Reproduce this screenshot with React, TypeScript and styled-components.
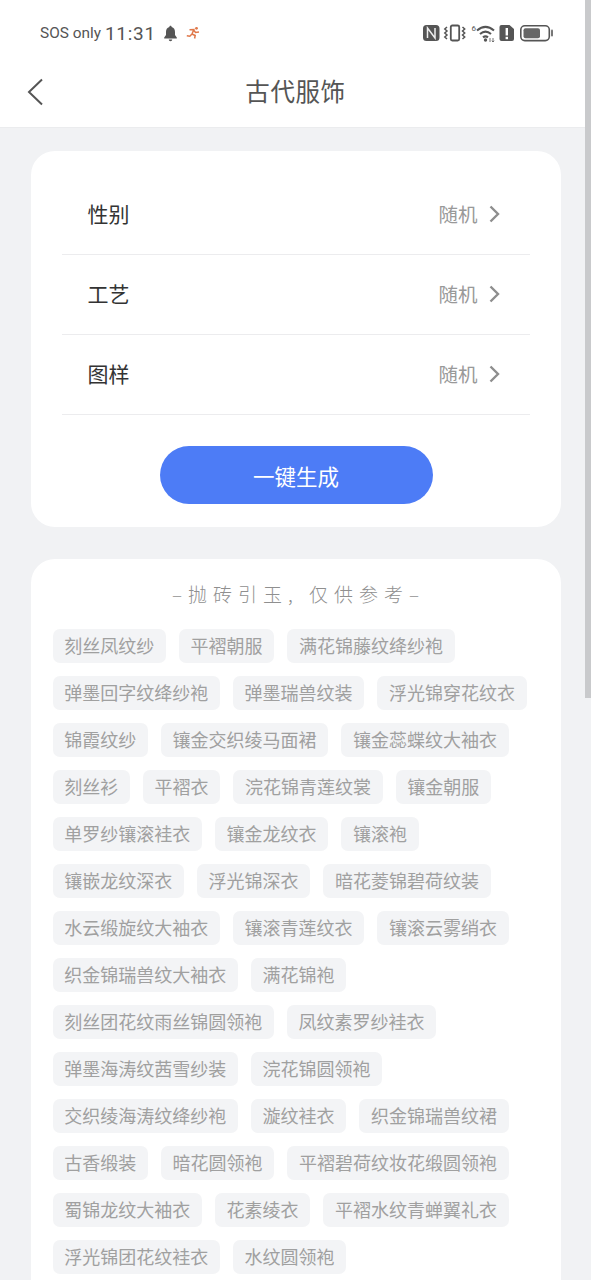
import React from "react";
import styled, { createGlobalStyle } from "styled-components";

const Global = createGlobalStyle`
  html, body { margin: 0; padding: 0; height: 1280px; overflow: hidden; background: #f1f2f4; }
  * { box-sizing: border-box; }
  #root { height: 1280px; overflow: hidden; }
`;

const Screen = styled.div`
  position: relative;
  width: 591px;
  height: 1280px;
  overflow: hidden;
  background: #f1f2f4;
  font-family: "Noto Sans CJK SC", "Noto Sans", sans-serif;
`;

const TopArea = styled.header`
  background: #fff;
  height: 128px;
  border-bottom: 1px solid #ebecee;
`;

const StatusBar = styled.div`
  height: 56px;
  padding: 10px 38px 0 40px;
  display: flex;
  align-items: center;
  justify-content: space-between;
  color: #555;
`;

const StatusGroup = styled.div`
  display: flex;
  align-items: center;
`;

const SosText = styled.span`
  font: 400 15.4px Roboto, sans-serif;
  margin-right: 4px;
`;

const Clock = styled.span`
  font: 400 19px Roboto, sans-serif;
  letter-spacing: 0.7px;
  margin-right: 7px;
`;

const Runner = styled.svg`
  width: 14px;
  height: 14px;
  margin-left: 8px;
`;

const NavBar = styled.div`
  position: relative;
  height: 71px;
  display: flex;
  align-items: center;
  justify-content: center;
  padding-bottom: 2px;
`;

const BackButton = styled.svg`
  position: absolute;
  left: 27px;
  top: 22px;
  width: 17px;
  height: 28px;
`;

const Title = styled.h1`
  margin: 0;
  font-size: 24.5px;
  font-weight: 400;
  color: #555;
  letter-spacing: 0.6px;
`;

const Card = styled.section`
  width: 530px;
  margin: 0 auto;
  background: #fff;
  border-radius: 24px;
`;

const FormCard = styled(Card)`
  margin-top: 23px;
  height: 376px;
  padding: 24px 31px 0;
`;

const Row = styled.div`
  height: 80px;
  border-bottom: 1px solid #ececee;
  padding: 0 30px 3px 26px;
  display: flex;
  align-items: center;
  justify-content: space-between;
`;

const RowLabel = styled.span`
  font-size: 21px;
  color: #333;
  font-weight: 400;
`;

const RowValue = styled.span`
  display: flex;
  align-items: center;
  gap: 11px;
  font-size: 19.5px;
  color: #999;
`;

const Chevron = styled.svg`
  width: 11px;
  height: 18px;
  margin-top: 2px;
`;

const GenerateButton = styled.button`
  display: block;
  width: 273px;
  height: 58px;
  margin: 31px 0 0 98px;
  padding: 0;
  border: 0;
  border-radius: 29px;
  background: #4d7cf6;
  color: #fff;
  font-family: inherit;
  font-size: 21.5px;
  font-weight: 400;
`;

const IdeasCard = styled(Card)`
  margin-top: 32px;
  padding: 19px 22px 40px;
  height: 800px;
`;

const IdeasTitle = styled.div`
  text-align: center;
  font-size: 19px;
  line-height: 32px;
  height: 32px;
  color: #8f8f8f;
  letter-spacing: 6px;
  font-weight: 300;
  margin-bottom: 19px;
  padding-left: 6px;
`;

const Tags = styled.div`
  display: flex;
  flex-wrap: wrap;
  gap: 13px 13px;
`;

const Tag = styled.span`
  height: 34px;
  line-height: 33px;
  padding: 0 11.7px;
  border-radius: 7px;
  background: #f3f4f6;
  color: #a0a0a0;
  font-size: 18px;
  white-space: nowrap;
`;

const Scrollbar = styled.div`
  position: absolute;
  right: 0;
  top: 0;
  width: 6px;
  height: 698px;
  background: #c9cacc;
`;

const tags = [
  "刻丝凤纹纱", "平褶朝服", "满花锦藤纹绛纱袍", "弹墨回字纹绛纱袍", "弹墨瑞兽纹装", "浮光锦穿花纹衣",
  "锦霞纹纱", "镶金交织绫马面裙", "镶金蕊蝶纹大袖衣", "刻丝衫", "平褶衣", "浣花锦青莲纹裳", "镶金朝服",
  "单罗纱镶滚袿衣", "镶金龙纹衣", "镶滚袍", "镶嵌龙纹深衣", "浮光锦深衣", "暗花菱锦碧荷纹装",
  "水云缎旋纹大袖衣", "镶滚青莲纹衣", "镶滚云雾绡衣", "织金锦瑞兽纹大袖衣", "满花锦袍",
  "刻丝团花纹雨丝锦圆领袍", "凤纹素罗纱袿衣", "弹墨海涛纹茜雪纱装", "浣花锦圆领袍",
  "交织绫海涛纹绛纱袍", "漩纹袿衣", "织金锦瑞兽纹裙", "古香缎装", "暗花圆领袍", "平褶碧荷纹妆花缎圆领袍",
  "蜀锦龙纹大袖衣", "花素绫衣", "平褶水纹青蝉翼礼衣", "浮光锦团花纹袿衣", "水纹圆领袍",
];

const rows = ["性别", "工艺", "图样"];

const ChevronIcon = () => (
  <Chevron viewBox="0 0 11 18">
    <path d="M1.500 1.500 9 9l-7.500 7.500" fill="none" stroke="#8e8e8e" strokeWidth="2.400" />
  </Chevron>
);

const BellIcon = () => (
  <svg width="15" height="17" viewBox="0 0 15 17">
    <path d="M7.500 0.800c.7 0 1.100.5 1.100 1.200 2.400.6 3.400 2.500 3.400 5v3l1.800 2.600v.8H1.200v-.8L3 10V7c0-2.500 1-4.400 3.400-5 0-.7.400-1.200 1.100-1.200zM5.800 14.600h3.400c0 1-.7 1.700-1.700 1.700s-1.700-.7-1.700-1.700z" fill="#555" />
  </svg>
);

const RunnerIcon = () => (
  <Runner viewBox="0 0 14 14">
    <circle cx="10.500" cy="2.300" r="1.400" fill="#e0784a" />
    <path d="M3.500 3.800 7.800 3.500 6 8l3.200 1.500-.6 3M6 8 3.800 10.200 .8 9.800M8 4.500 9.500 6.500 13 6" fill="none" stroke="#e0784a" strokeWidth="1.500" />
  </Runner>
);

const StatusIcons = () => (
  <svg width="130" height="20" viewBox="0 0 130 20">
    {/* NFC */}
    <path d="M3.500 2H13a3.500 3.500 0 0 1 3.500 3.500v9A3.500 3.500 0 0 1 13 18H3.500A3.500 3.500 0 0 1 0 14.500v-9A3.500 3.500 0 0 1 3.500 2z" fill="#555" />
    <path d="M4.500 15V5l7.500 10V5" fill="none" stroke="#eee" strokeWidth="1.500" />
    {/* vibrate */}
    <rect x="27.800" y="2.500" width="8.400" height="15" rx="1.500" fill="none" stroke="#555" strokeWidth="1.800" />
    <path d="M24 4l-2.200 2 2.200 2-2.200 2 2.200 2-2.200 2 2.200 2M39.500 4l2.200 2-2.200 2 2.200 2-2.200 2 2.200 2-2.200 2" fill="none" stroke="#555" strokeWidth="1.500" />
    {/* wifi */}
    <text x="48.500" y="8" fontSize="8" fontFamily="Roboto, sans-serif" fill="#555">6</text>
    <path d="M54 7.500c5.500-4.800 11.500-4.800 17 0M57 11c3.800-3.200 7.200-3.200 11 0M60 14.300c1.800-1.400 3.200-1.400 5 0" fill="none" stroke="#555" strokeWidth="2.100" />
    <circle cx="62.500" cy="17" r="1.700" fill="#555" />
    <path d="M67 15v4M70 15v4M70 19l-1.200-1.300M70 19l1.200-1.300" fill="none" stroke="#666" strokeWidth="0.900" />
    {/* SIM alert */}
    <path d="M78.500 2h8L91 6v10a2 2 0 0 1-2 2H78.500a2 2 0 0 1-2-2V4a2 2 0 0 1 2-2z" fill="#555" />
    <rect x="82.600" y="5" width="2.400" height="7.500" fill="#fff" />
    <rect x="82.600" y="13.800" width="2.400" height="2.400" fill="#fff" />
    {/* battery */}
    <rect x="97.800" y="2.800" width="28.500" height="14.800" rx="4" fill="none" stroke="#555" strokeWidth="1.600" />
    <rect x="100.500" y="5.200" width="16.500" height="10" rx="2" fill="#666" />
    <rect x="128" y="6.500" width="2" height="7" rx="1" fill="#777" />
  </svg>
);

export default function App() {
  return (
    <Screen>
      <Global />
      <TopArea>
        <StatusBar>
          <StatusGroup>
            <SosText>SOS only</SosText>
            <Clock>11:31</Clock>
            <BellIcon />
            <RunnerIcon />
          </StatusGroup>
          <StatusGroup>
            <StatusIcons />
          </StatusGroup>
        </StatusBar>
        <NavBar>
          <BackButton viewBox="0 0 17 28">
            <path d="M15 1.500 2 14l13 12.500" fill="none" stroke="#555" strokeWidth="2" />
          </BackButton>
          <Title>古代服饰</Title>
        </NavBar>
      </TopArea>
      <FormCard>
        {rows.map((label) => (
          <Row key={label}>
            <RowLabel>{label}</RowLabel>
            <RowValue>
              随机
              <ChevronIcon />
            </RowValue>
          </Row>
        ))}
        <GenerateButton>一键生成</GenerateButton>
      </FormCard>
      <IdeasCard>
        <IdeasTitle>–抛砖引玉, 仅供参考–</IdeasTitle>
        <Tags>
          {tags.map((t) => (
            <Tag key={t}>{t}</Tag>
          ))}
        </Tags>
      </IdeasCard>
      <Scrollbar />
    </Screen>
  );
}
